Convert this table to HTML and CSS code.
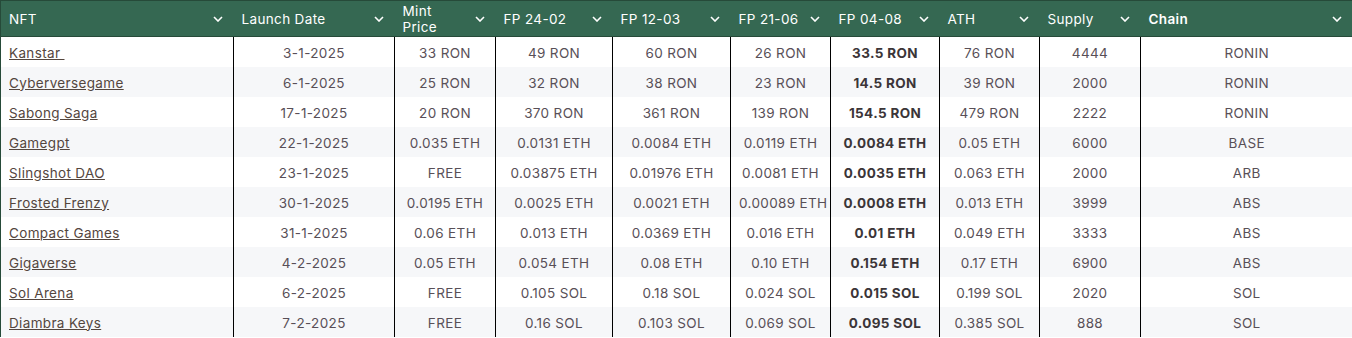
FILE: index.html
```html
<!DOCTYPE html>
<html lang="en">

<head>
    <meta charset="utf-8">
    <meta name="viewport" content="width=device-width, initial-scale=1.0">
    <title>NFT tracker</title>
    <link rel="stylesheet" href="styles.css">
</head>

<body>
    <table class="nft-tabel">
        <colgroup>
            <col class="c-nft">
            <col class="c-date">
            <col class="c-mint">
            <col class="c-fp1">
            <col class="c-fp2">
            <col class="c-fp3">
            <col class="c-fp4">
            <col class="c-ath">
            <col class="c-supply">
            <col class="c-chain">
        </colgroup>
        <thead>
            <tr>
                <th><div class="th-inner"><span>NFT</span><svg class="chevron" viewBox="0 0 10 6"><polyline points="1,1 5,5 9,1"/></svg></div></th>
                <th><div class="th-inner"><span>Launch Date</span><svg class="chevron" viewBox="0 0 10 6"><polyline points="1,1 5,5 9,1"/></svg></div></th>
                <th><div class="th-inner"><span>Mint<br>Price</span><svg class="chevron" viewBox="0 0 10 6"><polyline points="1,1 5,5 9,1"/></svg></div></th>
                <th><div class="th-inner"><span>FP 24-02</span><svg class="chevron" viewBox="0 0 10 6"><polyline points="1,1 5,5 9,1"/></svg></div></th>
                <th><div class="th-inner"><span>FP 12-03</span><svg class="chevron" viewBox="0 0 10 6"><polyline points="1,1 5,5 9,1"/></svg></div></th>
                <th><div class="th-inner"><span>FP 21-06</span><svg class="chevron" viewBox="0 0 10 6"><polyline points="1,1 5,5 9,1"/></svg></div></th>
                <th><div class="th-inner"><span>FP 04-08</span><svg class="chevron" viewBox="0 0 10 6"><polyline points="1,1 5,5 9,1"/></svg></div></th>
                <th><div class="th-inner"><span>ATH</span><svg class="chevron" viewBox="0 0 10 6"><polyline points="1,1 5,5 9,1"/></svg></div></th>
                <th><div class="th-inner"><span>Supply</span><svg class="chevron" viewBox="0 0 10 6"><polyline points="1,1 5,5 9,1"/></svg></div></th>
                <th class="th-chain"><div class="th-inner"><span>Chain</span><svg class="chevron" viewBox="0 0 10 6"><polyline points="1,1 5,5 9,1"/></svg></div></th>
            </tr>
        </thead>
        <tbody>
            <tr><td><a href="#">Kanstar&nbsp;</a></td><td>3-1-2025</td><td>33 RON</td><td>49 RON</td><td>60 RON</td><td>26 RON</td><td class="nu">33.5 RON</td><td>76 RON</td><td>4444</td><td>RONIN</td></tr>
            <tr><td><a href="#">Cyberversegame</a></td><td>6-1-2025</td><td>25 RON</td><td>32 RON</td><td>38 RON</td><td>23 RON</td><td class="nu">14.5 RON</td><td>39 RON</td><td>2000</td><td>RONIN</td></tr>
            <tr><td><a href="#">Sabong Saga</a></td><td>17-1-2025</td><td>20 RON</td><td>370 RON</td><td>361 RON</td><td>139 RON</td><td class="nu">154.5 RON</td><td>479 RON</td><td>2222</td><td>RONIN</td></tr>
            <tr><td><a href="#">Gamegpt</a></td><td>22-1-2025</td><td>0.035 ETH</td><td>0.0131 ETH</td><td>0.0084 ETH</td><td>0.0119 ETH</td><td class="nu">0.0084 ETH</td><td>0.05 ETH</td><td>6000</td><td>BASE</td></tr>
            <tr><td><a href="#">Slingshot DAO</a></td><td>23-1-2025</td><td>FREE</td><td>0.03875 ETH</td><td>0.01976 ETH</td><td>0.0081 ETH</td><td class="nu">0.0035 ETH</td><td>0.063 ETH</td><td>2000</td><td>ARB</td></tr>
            <tr><td><a href="#">Frosted Frenzy</a></td><td>30-1-2025</td><td>0.0195 ETH</td><td>0.0025 ETH</td><td>0.0021 ETH</td><td>0.00089 ETH</td><td class="nu">0.0008 ETH</td><td>0.013 ETH</td><td>3999</td><td>ABS</td></tr>
            <tr><td><a href="#">Compact Games</a></td><td>31-1-2025</td><td>0.06 ETH</td><td>0.013 ETH</td><td>0.0369 ETH</td><td>0.016 ETH</td><td class="nu">0.01 ETH</td><td>0.049 ETH</td><td>3333</td><td>ABS</td></tr>
            <tr><td><a href="#">Gigaverse</a></td><td>4-2-2025</td><td>0.05 ETH</td><td>0.054 ETH</td><td>0.08 ETH</td><td>0.10 ETH</td><td class="nu">0.154 ETH</td><td>0.17 ETH</td><td>6900</td><td>ABS</td></tr>
            <tr><td><a href="#">Sol Arena</a></td><td>6-2-2025</td><td>FREE</td><td>0.105 SOL</td><td>0.18 SOL</td><td>0.024 SOL</td><td class="nu">0.015 SOL</td><td>0.199 SOL</td><td>2020</td><td>SOL</td></tr>
            <tr><td><a href="#">Diambra Keys</a></td><td>7-2-2025</td><td>FREE</td><td>0.16 SOL</td><td>0.103 SOL</td><td>0.069 SOL</td><td class="nu">0.095 SOL</td><td>0.385 SOL</td><td>888</td><td>SOL</td></tr>
        </tbody>
    </table>
</body>

</html>
```

FILE: styles.css
```css
body {
    margin: 0;
    background-color: white;
    font-family: 'Inter', 'Open Sans', sans-serif;
    font-size: 13.5px;
    letter-spacing: .35px;
}

.nft-tabel {
    width: 1352px;
    table-layout: fixed;
    border-collapse: collapse;
    border-top: 1px solid #264a39;
    border-left: 1px solid #264a39;
}

.c-nft { width: 233px; }
.c-date { width: 161px; }
.c-mint { width: 101px; }
.c-fp1 { width: 117px; }
.c-fp2 { width: 118px; }
.c-fp3 { width: 100px; }
.c-fp4 { width: 109px; }
.c-ath { width: 100px; }
.c-supply { width: 101px; }
.c-chain { width: 212px; }

thead th {
    height: 35px;
    padding: 0 11px 0 8px;
    background-color: #356852;
    color: white;
    font-weight: 400;
    text-align: left;
    border-bottom: 1px solid #264a39;
}

.th-inner {
    display: flex;
    align-items: center;
    justify-content: space-between;
    line-height: 16px;
}

.th-chain {
    font-weight: 600;
}

.chevron {
    width: 10px;
    height: 6px;
    flex-shrink: 0;
    fill: none;
    stroke: white;
    stroke-width: 1.6;
}

tbody td {
    height: 29px;
    padding: 1px 8px 0;
    text-align: center;
    color: #584f57;
    white-space: nowrap;
}

tbody td + td {
    border-left: 1px solid #000;
}

tbody td:first-child {
    text-align: left;
}

tbody tr:nth-child(2n) {
    background-color: #f6f7f9;
}

tbody a {
    color: #54463e;
}

.nu {
    font-weight: 700;
    color: #3b3538;
}
```
